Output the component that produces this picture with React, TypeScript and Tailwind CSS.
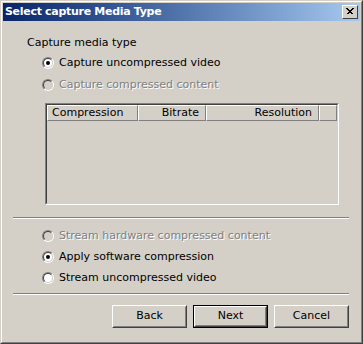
import React from "react";

const font = { fontFamily: '"DejaVu Sans", Tahoma, sans-serif' };

function Radio({ checked, disabled, label }: { checked?: boolean; disabled?: boolean; label: string }) {
  return (
    <div className="flex h-[13px] items-center pl-[39px]">
      <div className="h-[12px] w-[12px] rounded-full border border-t-[#808080] border-l-[#808080] border-b-white border-r-white">
        <div
          className={
            "flex h-full w-full items-center justify-center rounded-full border border-t-[#404040] border-l-[#404040] border-b-[#d4d0c8] border-r-[#d4d0c8] " +
            (disabled ? "bg-[#d4d0c8]" : "bg-white")
          }
        >
          {checked && <div className="h-[4px] w-[4px] rounded-full bg-black" />}
        </div>
      </div>
      <span
        className={"ml-[5px] whitespace-nowrap text-[11px] leading-[13px] " + (disabled ? "text-[#808080] [text-shadow:1px_1px_0_#ffffff]" : "text-black")}
      >
        {label}
      </span>
    </div>
  );
}

function HeaderCell({ w, label, align }: { w: string; label?: string; align: "left" | "right" }) {
  return (
    <div
      className={
        "flex h-full items-center border-t border-l border-t-white border-l-white border-r border-b border-r-[#808080] border-b-[#808080] text-[11px] text-black " +
        w +
        (align === "left" ? " justify-start pl-[4px]" : " justify-end pr-[6px]")
      }
    >
      {label}
    </div>
  );
}

function Button({ label, def }: { label: string; def?: boolean }) {
  return (
    <div className={"h-[23px] w-[75px] " + (def ? "border border-black" : "")}>
      <div className="h-full w-full border border-t-white border-l-white border-b-[#404040] border-r-[#404040]">
        <div className="flex h-full w-full items-center justify-center border border-t-[#d4d0c8] border-l-[#d4d0c8] border-b-[#808080] border-r-[#808080] text-[11px] text-black">
          {label}
        </div>
      </div>
    </div>
  );
}

export default function App() {
  return (
    <div className="h-[344px] w-[363px] bg-[#d4d0c8]" style={font}>
      <div className="h-full w-full border border-t-[#d4d0c8] border-l-[#d4d0c8] border-b-[#404040] border-r-[#404040]">
        <div className="h-full w-full border border-t-white border-l-white border-b-[#808080] border-r-[#808080] p-[1px]">
          <div className="flex h-[18px] items-center justify-between bg-gradient-to-r from-[#0a246a] to-[#a6caf0] pl-[2px] pr-[2px]">
            <span className="text-[11px] font-bold tracking-[-0.3px] text-white">Select capture Media Type</span>
            <div className="h-[14px] w-[16px] border border-t-white border-l-white border-b-[#404040] border-r-[#404040] bg-[#d4d0c8]">
              <svg width="14" height="12" viewBox="0 0 14 12" className="block">
                <path d="M3.5 2.5 L9.5 8.5 M4.5 2.5 L10.5 8.5 M9.5 2.5 L3.5 8.5 M10.5 2.5 L4.5 8.5" stroke="#000" strokeWidth="1" shapeRendering="crispEdges" />
              </svg>
            </div>
          </div>
          <div className="flex flex-col">
            <div className="mt-[15px] h-[13px] pl-[24px] text-[11px] leading-[13px] text-black">Capture media type</div>
            <div className="mt-[7px]">
              <Radio checked label="Capture uncompressed video" />
            </div>
            <div className="mt-[9px]">
              <Radio disabled label="Capture compressed content" />
            </div>
            <div className="ml-[42px] mt-[12px] h-[102px] w-[294px] border border-t-[#808080] border-l-[#808080] border-b-white border-r-white">
              <div className="h-full w-full border border-t-[#404040] border-l-[#404040] border-b-[#d4d0c8] border-r-[#d4d0c8]">
                <div className="flex h-[16px]">
                  <HeaderCell w="w-[91px]" label="Compression" align="left" />
                  <HeaderCell w="w-[68px]" label="Bitrate" align="right" />
                  <HeaderCell w="w-[113px]" label="Resolution" align="right" />
                  <HeaderCell w="flex-1" align="left" />
                </div>
              </div>
            </div>
            <div className="ml-[10px] mt-[12px] h-[2px] w-[336px] border-t border-b border-t-[#808080] border-b-white" />
            <div className="mt-[10px]">
              <Radio disabled label="Stream hardware compressed content" />
            </div>
            <div className="mt-[8px]">
              <Radio checked label="Apply software compression" />
            </div>
            <div className="mt-[8px]">
              <Radio label="Stream uncompressed video" />
            </div>
            <div className="ml-[10px] mt-[9px] h-[2px] w-[336px] border-t border-b border-t-[#808080] border-b-white" />
            <div className="mt-[10px] flex justify-end gap-[6px] pr-[11px]">
              <Button label="Back" />
              <Button label="Next" def />
              <Button label="Cancel" />
            </div>
          </div>
        </div>
      </div>
    </div>
  );
}
